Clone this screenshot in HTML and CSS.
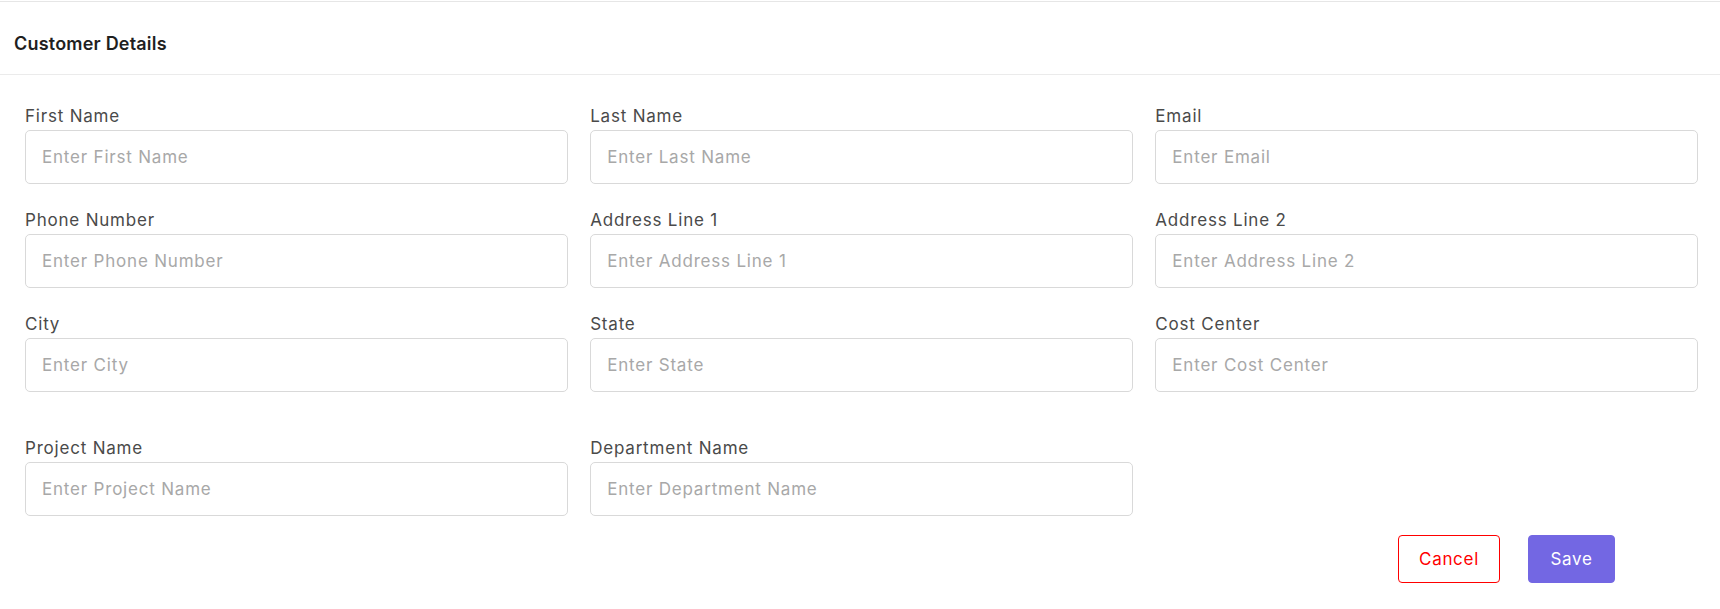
FILE: index.html
```html
<!DOCTYPE html>
<html lang="en">
<head>
<meta charset="utf-8">
<title>Customer Details</title>
<link rel="stylesheet" href="styles.css">
</head>
<body>
<div class="card">
  <div class="card-header">
    <h2 class="card-title">Customer Details</h2>
  </div>
  <form class="card-body">
    <div class="grid">
      <div class="field">
        <label class="label">First Name</label>
        <input class="input" type="text" placeholder="Enter First Name">
      </div>
      <div class="field">
        <label class="label">Last Name</label>
        <input class="input" type="text" placeholder="Enter Last Name">
      </div>
      <div class="field">
        <label class="label">Email</label>
        <input class="input" type="text" placeholder="Enter Email">
      </div>
      <div class="field">
        <label class="label">Phone Number</label>
        <input class="input" type="text" placeholder="Enter Phone Number">
      </div>
      <div class="field">
        <label class="label">Address Line 1</label>
        <input class="input" type="text" placeholder="Enter Address Line 1">
      </div>
      <div class="field">
        <label class="label">Address Line 2</label>
        <input class="input" type="text" placeholder="Enter Address Line 2">
      </div>
      <div class="field">
        <label class="label">City</label>
        <input class="input" type="text" placeholder="Enter City">
      </div>
      <div class="field">
        <label class="label">State</label>
        <input class="input" type="text" placeholder="Enter State">
      </div>
      <div class="field">
        <label class="label">Cost Center</label>
        <input class="input" type="text" placeholder="Enter Cost Center">
      </div>
      <div class="field field-spaced">
        <label class="label">Project Name</label>
        <input class="input" type="text" placeholder="Enter Project Name">
      </div>
      <div class="field field-spaced">
        <label class="label">Department Name</label>
        <input class="input" type="text" placeholder="Enter Department Name">
      </div>
    </div>
    <div class="actions">
      <button type="button" class="btn btn-cancel">Cancel</button>
      <button type="button" class="btn btn-save">Save</button>
    </div>
  </form>
</div>
</body>
</html>
```

FILE: styles.css
```css
* {
  box-sizing: border-box;
}

html, body {
  margin: 0;
  padding: 0;
  background: #ffffff;
}

body {
  font-family: Inter, "Noto Sans", "Liberation Sans", sans-serif;
  color: #4a4a4a;
}

.card {
  border-top: 1px solid #e6e6e6;
  margin-top: 1px;
}

.card-header {
  height: 73px;
  border-bottom: 1px solid #ebebeb;
  display: flex;
  align-items: flex-start;
  padding: 30px 14px 0;
}

.card-title {
  margin: 0;
  font-size: 18px;
  font-weight: 600;
  color: #1f1f1f;
  line-height: 24px;
  letter-spacing: 0.2px;
}

.card-body {
  padding: 31px 22px 0 25px;
}

.grid {
  display: grid;
  grid-template-columns: repeat(3, 1fr);
  column-gap: 22.5px;
  row-gap: 26px;
}

.field {
  display: flex;
  flex-direction: column;
}

.field-spaced {
  margin-top: 20px;
}

.label {
  font-size: 17px;
  line-height: 20px;
  letter-spacing: 0.8px;
  color: #4a4a4a;
  margin-bottom: 4px;
}

.input {
  height: 54px;
  border: 1px solid #d9d9d9;
  border-radius: 5px;
  padding: 0 16px;
  font-family: inherit;
  font-size: 17px;
  letter-spacing: 0.8px;
  color: #333;
  background: #fff;
  outline: none;
}

.input::placeholder {
  color: #a8a8a8;
}

.actions {
  display: flex;
  justify-content: flex-end;
  gap: 28px;
  margin-top: 19px;
  padding-right: 83px;
}

.btn {
  height: 48px;
  border-radius: 4px;
  font-family: inherit;
  font-size: 17px;
  letter-spacing: 0.7px;
  cursor: pointer;
}

.btn-cancel {
  width: 102px;
  background: #fff;
  border: 1px solid #ff0000;
  color: #ff0000;
}

.btn-save {
  width: 87px;
  background: #7367e3;
  border: 1px solid #7367e3;
  color: #ffffff;
}
```
